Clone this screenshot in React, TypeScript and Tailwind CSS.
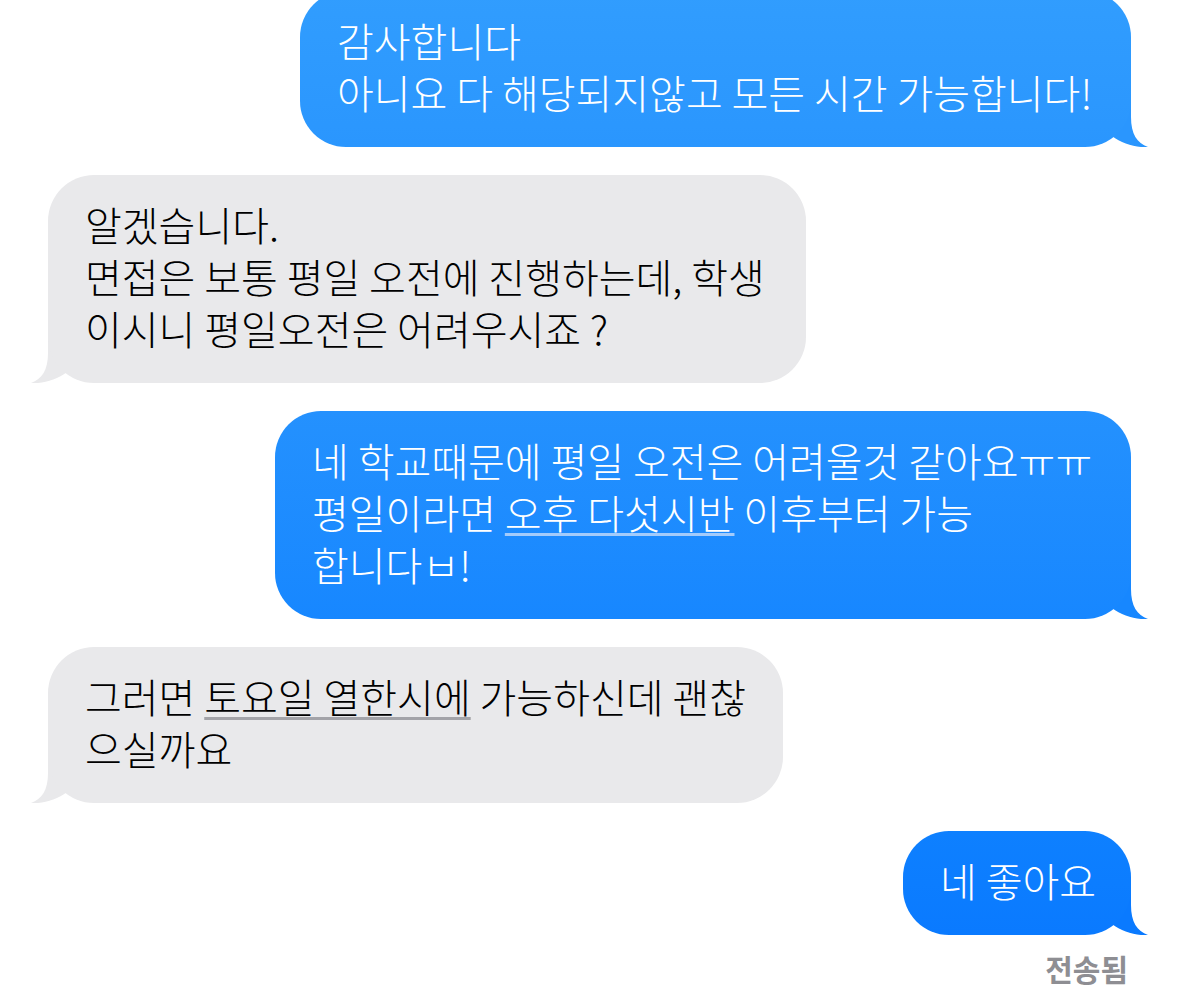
import React from "react";

type Side = "me" | "them";

interface BubbleProps {
  side: Side;
  width: string;
  bg: string;
  tail: string;
  children: React.ReactNode;
}

const Tail: React.FC<{ side: Side; color: string }> = ({ side, color }) => (
  <svg
    width="40"
    height="50"
    viewBox="0 0 40 50"
    className={`absolute bottom-0 ${
      side === "me" ? "right-[-17px]" : "left-[-17px] -scale-x-100"
    }`}
  >
    <path
      d="M23 0 L23 20 C23 37 29 46 40 50 C29 51 14 47 4 39 L0 30 L0 0 Z"
      fill={color}
    />
  </svg>
);

const Bubble: React.FC<BubbleProps> = ({ side, width, bg, tail, children }) => (
  <div
    className={`relative ${width} ${side === "me" ? "self-end" : "self-start"}`}
  >
    <Tail side={side} color={tail} />
    <div
      className={`relative rounded-[46px] px-[37px] pt-[23px] pb-[29px] whitespace-nowrap text-[40px] leading-[52px] font-light ${bg} ${
        side === "me" ? "text-white" : "text-black"
      }`}
    >
      {children}
    </div>
  </div>
);

export default function App() {
  return (
    <div className="min-h-[999px] w-full overflow-hidden bg-white font-['Noto_Sans_CJK_KR','Noto_Sans',sans-serif]">
      <div className="flex flex-col gap-[28px] px-[48px] -mt-[9px]">
        <Bubble
          side="me"
          width="w-[831px]"
          bg="bg-gradient-to-b from-[#319dfe] to-[#2a96fe]"
          tail="#2a96fe"
        >
          감사합니다
          <br />
          아니요 다 해당되지않고 모든 시간 가능합니다!
        </Bubble>

        <Bubble side="them" width="w-[758px]" bg="bg-[#e9e9eb]" tail="#e9e9eb">
          알겠습니다.
          <br />
          면접은 보통 평일 오전에 진행하는데, 학생
          <br />
          이시니 평일오전은 어려우시죠 ?
        </Bubble>

        <Bubble
          side="me"
          width="w-[856px]"
          bg="bg-gradient-to-b from-[#2491fe] to-[#1787ff]"
          tail="#1787ff"
        >
          네 학교때문에 평일 오전은 어려울것 같아요ㅠㅠ
          <br />
          평일이라면{" "}
          <span className="underline decoration-[#a3cbfb] decoration-[3px] underline-offset-[4px]">
            오후 다섯시반
          </span>{" "}
          이후부터 가능
          <br />
          합니다ㅂ!
        </Bubble>

        <Bubble side="them" width="w-[735px]" bg="bg-[#e9e9eb]" tail="#e9e9eb">
          그러면{" "}
          <span className="underline decoration-[#a3a3a8] decoration-[3px] underline-offset-[4px]">
            토요일 열한시에
          </span>{" "}
          가능하신데 괜찮
          <br />
          으실까요
        </Bubble>

        <Bubble
          side="me"
          width="w-[228px]"
          bg="bg-gradient-to-b from-[#0e80ff] to-[#0a7aff]"
          tail="#0a7aff"
        >
          네 좋아요
        </Bubble>
      </div>
      <div className="mt-[16px] pr-[51px] text-right text-[30px] leading-[34px] font-semibold text-[#8e8e93]">
        전송됨
      </div>
    </div>
  );
}
